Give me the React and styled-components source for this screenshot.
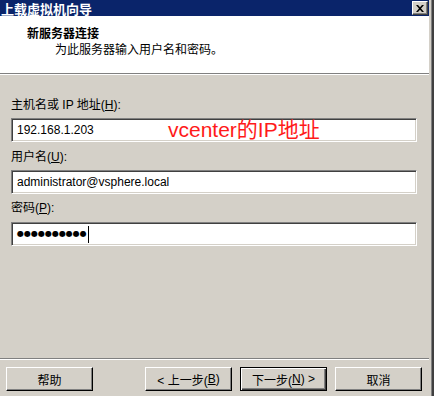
import React from "react";
import styled, { createGlobalStyle } from "styled-components";

const GlobalStyle = createGlobalStyle`
  html, body {
    margin: 0;
    padding: 0;
    background: #d4d0c8;
  }
  body {
    font-family: "Liberation Sans", "Noto Sans CJK SC", sans-serif;
    font-size: 12px;
    color: #000;
  }
`;

const Frame = styled.div`
  width: 434px;
  height: 396px;
  box-sizing: border-box;
  border-right: 2px solid #404040;
  overflow: hidden;
`;

const Window = styled.div`
  height: 100%;
  box-sizing: border-box;
  border-right: 1px solid #808080;
  padding-right: 2px;
  background: #d4d0c8;
  display: flex;
  flex-direction: column;
`;

const TitleBar = styled.div`
  height: 16px;
  flex: none;
  background: #0a246a;
  color: #fff;
  display: flex;
  align-items: center;
  justify-content: space-between;
  padding-left: 1px;
  font-family: "Noto Sans CJK SC", sans-serif;
  font-weight: 700;
  font-size: 13px;
`;

const TitleText = styled.span`
  line-height: 13px;
  height: 14px;
  display: flex;
  align-items: center;
`;

const CloseButton = styled.div`
  width: 16px;
  height: 14px;
  box-sizing: border-box;
  margin-right: 1px;
  background: #d4d0c8;
  border-top: 1px solid #fff;
  border-left: 1px solid #fff;
  border-right: 1px solid #404040;
  border-bottom: 1px solid #404040;
  box-shadow: inset -1px -1px #808080;
  display: flex;
  align-items: center;
  justify-content: center;
`;

const Header = styled.div`
  height: 58px;
  flex: none;
  box-sizing: border-box;
  background: #fff;
  border-bottom: 1px solid #808080;
  box-shadow: 0 1px 0 #fff;
  padding: 10px 0 0 27px;
`;

const HeaderTitle = styled.div`
  font-family: "Noto Sans CJK SC", sans-serif;
  font-weight: 700;
  font-size: 12px;
  line-height: 14px;
`;

const HeaderSub = styled.div`
  font-family: "Noto Sans CJK SC", sans-serif;
  font-size: 12px;
  line-height: 14px;
  margin: 2px 0 0 28px;
`;

const Body = styled.div`
  flex: 1;
  padding: 23px 12px 0 11px;
  margin-top: 1px;
  display: flex;
  flex-direction: column;
`;

const Label = styled.div`
  line-height: 14px;
  height: 14px;
  margin-bottom: ${(p) => p.$gap}px;
  margin-top: ${(p) => p.$top || 0}px;
  white-space: pre;
`;

const Key = styled.span`
  text-decoration: underline;
`;

const Input = styled.div`
  position: relative;
  height: 24px;
  flex: none;
  box-sizing: border-box;
  background: #fff;
  border-top: 1px solid #808080;
  border-left: 1px solid #808080;
  border-right: 1px solid #fff;
  border-bottom: 1px solid #fff;
  box-shadow: inset 1px 1px #404040, inset -1px -1px #d4d0c8;
  padding: 0 0 0 5px;
  display: flex;
  align-items: center;
  line-height: 14px;
`;

const Note = styled.span`
  position: absolute;
  left: 156px;
  top: -1px;
  color: #ff1a1a;
  font-family: "Liberation Sans", "Noto Sans CJK SC", sans-serif;
  font-size: 21px;
  line-height: 24px;
  white-space: nowrap;
`;

const Dots = styled.span`
  font-family: "DejaVu Sans", sans-serif;
  font-size: 8px;
  letter-spacing: 0;
`;

const Caret = styled.span`
  width: 1px;
  height: 17px;
  background: #000;
  margin-left: 1px;
`;

const Footer = styled.div`
  height: 38px;
  flex: none;
  border-top: 1px solid #808080;
  box-shadow: inset 0 1px #fff;
  display: flex;
  align-items: flex-start;
  padding: 8px 0 0 6px;
  box-sizing: border-box;
`;

const Button = styled.div`
  width: 87px;
  height: 24px;
  box-sizing: border-box;
  margin-left: ${(p) => p.$gap || 0}px;
  background: #d4d0c8;
  border-top: 1px solid ${(p) => (p.$default ? "#000" : "#fff")};
  border-left: 1px solid ${(p) => (p.$default ? "#000" : "#fff")};
  border-right: 1px solid #000;
  border-bottom: 1px solid #000;
  box-shadow: ${(p) =>
    p.$default
      ? "inset 1px 1px #fff, inset -1px -1px #404040, inset -2px -2px #808080"
      : "inset -1px -1px #808080"};
  display: flex;
  align-items: center;
  justify-content: center;
  font-family: "Liberation Sans", "Noto Sans CJK SC", sans-serif;
  font-size: 12px;
  white-space: pre;
`;

export default function App() {
  return (
    <>
      <GlobalStyle />
      <Frame>
        <Window>
          <TitleBar>
            <TitleText>上载虚拟机向导</TitleText>
            <CloseButton>
              <svg width="8" height="7" viewBox="0 0 8 7">
                <path d="M0 0h2l2 2.2L6 0h2L5 3.5 8 7H6L4 4.8 2 7H0l3-3.5z" fill="#000" />
              </svg>
            </CloseButton>
          </TitleBar>
          <Header>
            <HeaderTitle>新服务器连接</HeaderTitle>
            <HeaderSub>为此服务器输入用户名和密码。</HeaderSub>
          </Header>
          <Body>
            <Label $gap={6}>
              主机名或 IP 地址(<Key>H</Key>):
            </Label>
            <Input>
              192.168.1.203
              <Note>vcenter的IP地址</Note>
            </Input>
            <Label $top={8} $gap={6}>
              用户名(<Key>U</Key>):
            </Label>
            <Input>administrator@vsphere.local</Input>
            <Label $top={7} $gap={7}>
              密码(<Key>P</Key>):
            </Label>
            <Input>
              <Dots>●●●●●●●●●●</Dots>
              <Caret />
            </Input>
          </Body>
          <Footer>
            <Button>帮助</Button>
            <Button $gap={52}>
              &lt; 上一步(<Key>B</Key>)
            </Button>
            <Button $gap={8} $default>
              下一步(<Key>N</Key>) &gt;
            </Button>
            <Button $gap={8}>取消</Button>
          </Footer>
        </Window>
      </Frame>
    </>
  );
}
